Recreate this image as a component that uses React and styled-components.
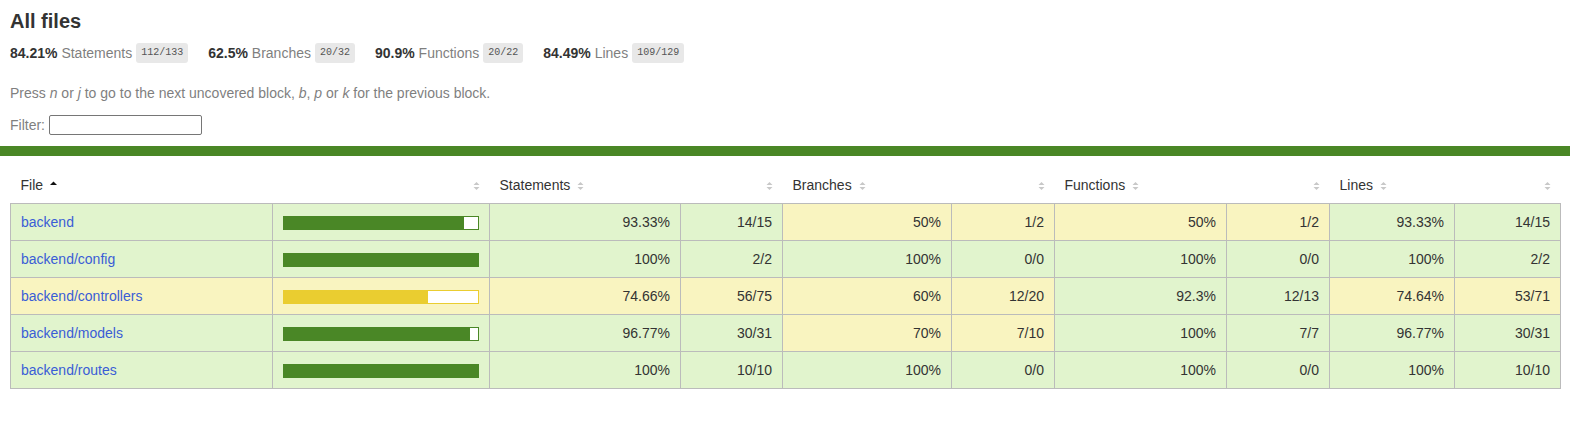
import React from "react";
import styled, { createGlobalStyle } from "styled-components";

const Global = createGlobalStyle`
  *, *::before, *::after { box-sizing: border-box; }
  html, body { margin: 0; padding: 0; background: #fff; }
  body {
    font-family: "Liberation Sans", Arial, Helvetica, sans-serif;
    font-size: 14px;
    color: #333;
  }
`;

const COLORS = {
  high: "#e1f4cd",
  medium: "#f9f4c0",
  highFill: "#4a8726",
  mediumFill: "#eacd30",
};

const Pad = styled.div`
  padding: ${(p) => (p.$top ? `${p.$top}px 10px 10px` : "10px")};
`;

const Title = styled.h1`
  font-size: 20px;
  line-height: 23px;
  margin: 0;
  font-weight: bold;
`;

const Summary = styled.div`
  display: flex;
  gap: 20px;
  padding: 10px 0;
  line-height: 16px;
`;

const SummaryItem = styled.div`
  display: flex;
  align-items: center;
  white-space: pre;
`;

const Strong = styled.span`
  font-weight: bold;
`;

const Quiet = styled.span`
  color: #7f7f7f;
`;

const Fraction = styled.span`
  font-family: "Liberation Mono", "DejaVu Sans Mono", monospace;
  font-size: 10px;
  line-height: 12px;
  color: #555;
  background: #e8e8e8;
  padding: 4px 5px;
  border-radius: 3px;
  margin-left: 4px;
`;

const Hint = styled.p`
  color: #7f7f7f;
  margin: 12px 0 14px;
  line-height: 16px;
`;

const FilterRow = styled.div`
  display: flex;
  align-items: center;
  gap: 4px;
  color: #7f7f7f;
  height: 20px;
`;

const SearchInput = styled.input`
  width: 153px;
  height: 20px;
  border: 1px solid #767676;
  border-radius: 2px;
  padding: 1px 4px;
  font: inherit;
  font-size: 13px;
  background: #fff;
`;

const StatusLine = styled.div`
  height: 10px;
  margin-top: 1px;
  background: ${COLORS.highFill};
`;

const Table = styled.table`
  border-collapse: collapse;
  width: 100%;
  table-layout: fixed;
`;

const Th = styled.th`
  text-align: ${(p) => (p.$right ? "right" : "left")};
  font-weight: normal;
  white-space: nowrap;
  padding: 10px;
  line-height: 16px;
  color: #333;
`;

const HeadRow = styled.tr`
  border-bottom: 1px solid #bbb;
`;

const TBody = styled.tbody`
  border: 1px solid #bbb;
`;

const Row = styled.tr`
  border-bottom: 1px solid #bbb;
`;

const Td = styled.td`
  padding: 10px;
  line-height: 16px;
  vertical-align: top;
  border-right: 1px solid #bbb;
  background: ${(p) => COLORS[p.$level]};
  text-align: ${(p) => (p.$right ? "right" : "left")};
  white-space: nowrap;
  &:last-child { border-right: none; }
`;

const FileLink = styled.a`
  color: #3a5dd6;
  text-decoration: none;
`;

const Chart = styled.div`
  display: flex;
  margin-top: 2px;
  height: 14px;
  border: 1px solid ${(p) => (p.$level === "medium" ? COLORS.mediumFill : COLORS.highFill)};
  line-height: 0;
`;

const CoverFill = styled.div`
  height: 12px;
  background: ${(p) => (p.$level === "medium" ? COLORS.mediumFill : COLORS.highFill)};
`;

const CoverEmpty = styled.div`
  height: 12px;
  flex: 1;
  background: #fff;
`;

const SorterBox = styled.span`
  display: inline-block;
  width: 7px;
  height: 10px;
  margin-left: 7px;
  vertical-align: -1px;
`;

const Sorter = ({ sorted }) => (
  <SorterBox>
    <svg width="7" height="10" viewBox="0 0 7 10">
      {sorted ? (
        <path d="M0 4 L3.5 0.5 L7 4 Z" fill="#111" />
      ) : (
        <>
          <path d="M0.5 4 L3.5 1 L6.5 4 Z" fill="#c8c8c8" />
          <path d="M0.5 6 L3.5 9 L6.5 6 Z" fill="#c8c8c8" />
        </>
      )}
    </svg>
  </SorterBox>
);

const summary = [
  ["84.21%", "Statements", "112/133"],
  ["62.5%", "Branches", "20/32"],
  ["90.9%", "Functions", "20/22"],
  ["84.49%", "Lines", "109/129"],
];

const lvl = (v) => (v >= 80 ? "high" : "medium");

const rows = [
  { file: "backend", m: [[93.33, "93.33%", "14/15"], [50, "50%", "1/2"], [50, "50%", "1/2"], [93.33, "93.33%", "14/15"]] },
  { file: "backend/config", m: [[100, "100%", "2/2"], [100, "100%", "0/0"], [100, "100%", "0/0"], [100, "100%", "2/2"]] },
  { file: "backend/controllers", m: [[74.66, "74.66%", "56/75"], [60, "60%", "12/20"], [92.3, "92.3%", "12/13"], [74.64, "74.64%", "53/71"]] },
  { file: "backend/models", m: [[96.77, "96.77%", "30/31"], [70, "70%", "7/10"], [100, "100%", "7/7"], [96.77, "96.77%", "30/31"]] },
  { file: "backend/routes", m: [[100, "100%", "10/10"], [100, "100%", "0/0"], [100, "100%", "0/0"], [100, "100%", "10/10"]] },
];

const colWidths = [262, 217, 191, 102, 169, 103, 172, 103, 125, 106];
const metrics = ["Statements", "Branches", "Functions", "Lines"];

export default function App() {
  return (
    <>
      <Global />
      <Pad>
        <Title>All files</Title>
        <Summary>
          {summary.map(([pct, name, frac]) => (
            <SummaryItem key={name}>
              <Strong>{pct} </Strong>
              <Quiet>{name}</Quiet>
              <Fraction>{frac}</Fraction>
            </SummaryItem>
          ))}
        </Summary>
        <Hint>
          Press <em>n</em> or <em>j</em> to go to the next uncovered block, <em>b</em>, <em>p</em> or{" "}
          <em>k</em> for the previous block.
        </Hint>
        <FilterRow>
          Filter:
          <SearchInput type="search" />
        </FilterRow>
      </Pad>
      <StatusLine />
      <Pad $top={11}>
        <Table>
          <colgroup>
            {colWidths.map((w, i) => (
              <col key={i} style={{ width: w }} />
            ))}
          </colgroup>
          <thead>
            <HeadRow>
              <Th>
                File
                <Sorter sorted />
              </Th>
              <Th $right>
                <Sorter />
              </Th>
              {metrics.map((m) => (
                <React.Fragment key={m}>
                  <Th>
                    {m}
                    <Sorter />
                  </Th>
                  <Th $right>
                    <Sorter />
                  </Th>
                </React.Fragment>
              ))}
            </HeadRow>
          </thead>
          <TBody>
            {rows.map((r) => {
              const main = r.m[0][0];
              const level = lvl(main);
              const fill = Math.floor(main);
              return (
                <Row key={r.file}>
                  <Td $level={level}>
                    <FileLink href="#">{r.file}</FileLink>
                  </Td>
                  <Td $level={level}>
                    <Chart $level={level}>
                      <CoverFill $level={level} style={{ width: `${fill}%` }} />
                      <CoverEmpty />
                    </Chart>
                  </Td>
                  {r.m.map(([v, pct, frac], i) => (
                    <React.Fragment key={i}>
                      <Td $level={lvl(v)} $right>
                        {pct}
                      </Td>
                      <Td $level={lvl(v)} $right>
                        {frac}
                      </Td>
                    </React.Fragment>
                  ))}
                </Row>
              );
            })}
          </TBody>
        </Table>
      </Pad>
    </>
  );
}
